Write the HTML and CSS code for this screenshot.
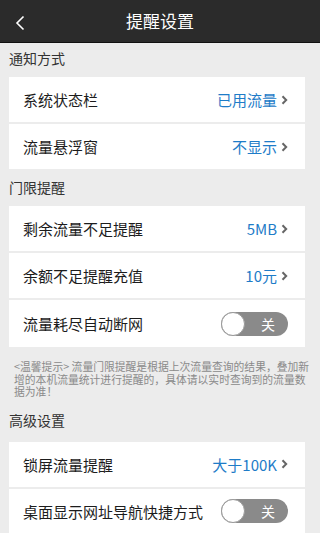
FILE: index.html
```
<!DOCTYPE html>
<html>
<head>
<meta charset="utf-8">
<link rel="stylesheet" href="styles.css">
</head>
<body>
<div class="header">
  <svg class="back" width="12" height="16" viewBox="0 0 12 16"><path d="M9.5 1.5 L3 8 L9.5 14.5" fill="none" stroke="#fff" stroke-width="1.6"/></svg>
  <div class="title">提醒设置</div>
</div>
<div class="section-title first">通知方式</div>
<div class="card">
  <div class="row"><span class="label">系统状态栏</span><span class="value">已用流量</span><svg class="chev" width="7" height="10" viewBox="0 0 7 10"><path d="M1.5 1.2 L5.2 5 L1.5 8.8" fill="none" stroke="#666" stroke-width="2"/></svg></div>
  <div class="row"><span class="label">流量悬浮窗</span><span class="value">不显示</span><svg class="chev" width="7" height="10" viewBox="0 0 7 10"><path d="M1.5 1.2 L5.2 5 L1.5 8.8" fill="none" stroke="#666" stroke-width="2"/></svg></div>
</div>
<div class="section-title">门限提醒</div>
<div class="card">
  <div class="row"><span class="label">剩余流量不足提醒</span><span class="value">5MB</span><svg class="chev" width="7" height="10" viewBox="0 0 7 10"><path d="M1.5 1.2 L5.2 5 L1.5 8.8" fill="none" stroke="#666" stroke-width="2"/></svg></div>
  <div class="row"><span class="label">余额不足提醒充值</span><span class="value">10元</span><svg class="chev" width="7" height="10" viewBox="0 0 7 10"><path d="M1.5 1.2 L5.2 5 L1.5 8.8" fill="none" stroke="#666" stroke-width="2"/></svg></div>
  <div class="row tall"><span class="label">流量耗尽自动断网</span><span class="toggle"><span class="knob"></span><span class="tg-text">关</span></span></div>
</div>
<div class="note">&lt;温馨提示&gt; 流量门限提醒是根据上次流量查询的结果，叠加新增的本机流量统计进行提醒的，具体请以实时查询到的流量数据为准！</div>
<div class="section-title after-note">高级设置</div>
<div class="card">
  <div class="row"><span class="label">锁屏流量提醒</span><span class="value">大于100K</span><svg class="chev" width="7" height="10" viewBox="0 0 7 10"><path d="M1.5 1.2 L5.2 5 L1.5 8.8" fill="none" stroke="#666" stroke-width="2"/></svg></div>
  <div class="row"><span class="label">桌面显示网址导航快捷方式</span><span class="toggle"><span class="knob"></span><span class="tg-text">关</span></span></div>
</div>
</body>
</html>
```
FILE: styles.css
```
html, body {
  margin: 0;
  padding: 0;
  background: #ececec;
  font-family: "Noto Sans CJK SC", "Noto Sans", sans-serif;
  overflow: hidden;
}
.header {
  height: 42px;
  background: #2b2b2b;
  border-bottom: 1px solid #111;
  display: flex;
  align-items: center;
  justify-content: center;
  position: relative;
}
.back {
  position: absolute;
  left: 14px;
  top: 15px;
}
.title {
  color: #fff;
  font-size: 17px;
  line-height: 20px;
}
.section-title {
  font-size: 14px;
  color: #333;
  padding-left: 9px;
  height: 37px;
  line-height: 37px;
}
.section-title.first {
  height: 34px;
  line-height: 30px;
}
.section-title.after-note {
  height: 44px;
  line-height: 44px;
}
.card {
  margin: 0 15px 0 9px;
  display: flex;
  flex-direction: column;
  gap: 2px;
}
.row {
  background: #fff;
  height: 45px;
  display: flex;
  align-items: center;
  padding: 0 17px 0 14px;
}
.row.tall { height: 47px; }
.label {
  flex: 1;
  font-size: 15px;
  color: #1c1c1c;
}
.value {
  font-size: 15px;
  color: #1e7cc8;
}
.chev {
  margin-left: 4px;
  flex: none;
}
.toggle {
  width: 67px;
  height: 24px;
  border-radius: 12px;
  background: #8a8a8a;
  display: flex;
  align-items: center;
}
.knob {
  width: 24px;
  height: 24px;
  border-radius: 50%;
  background: #fff;
  box-sizing: border-box;
  border: 1px solid #9a9a9a;
}
.tg-text {
  flex: 1;
  text-align: right;
  padding-right: 13px;
  color: #fff;
  font-size: 14px;
  line-height: 24px;
}
.note {
  font-size: 10.8px;
  line-height: 12.5px;
  color: #8a8a8a;
  padding: 13px 10px 0 14px;
}
```
